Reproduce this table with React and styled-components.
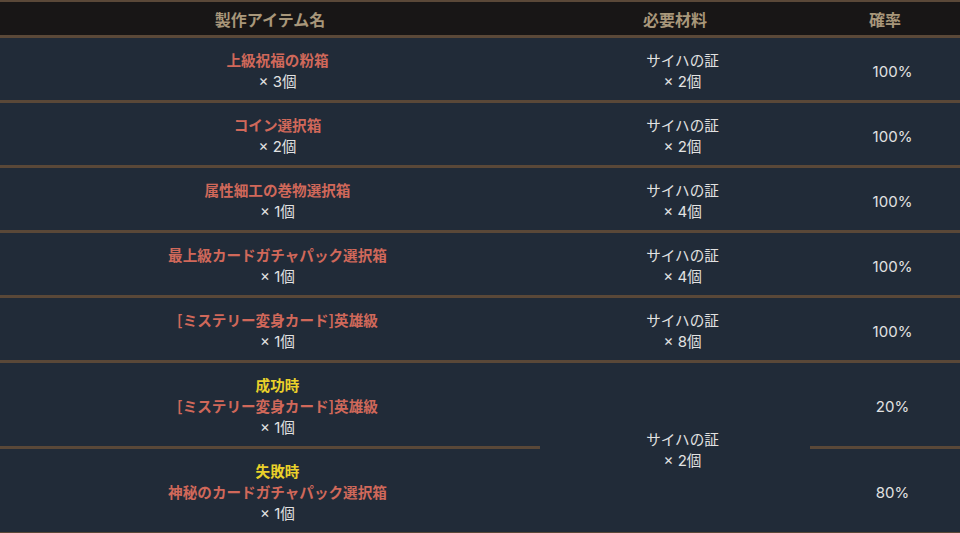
import styled, { createGlobalStyle } from "styled-components";

const rows = [
  { name: "上級祝福の粉箱", qty: 3, mat: 2, rate: "100%" },
  { name: "コイン選択箱", qty: 2, mat: 2, rate: "100%" },
  { name: "属性細工の巻物選択箱", qty: 1, mat: 4, rate: "100%" },
  { name: "最上級カードガチャパック選択箱", qty: 1, mat: 4, rate: "100%" },
  { name: "[ミステリー変身カード]英雄級", qty: 1, mat: 8, rate: "100%" },
];

function Quantity({ count }) {
  return (
    <div>
      <Num>× {count}</Num>個
    </div>
  );
}

export default function App() {
  return (
    <>
      <GlobalStyle />
      <StyledTable>
        <thead>
          <tr>
            <HeadCell $width="540px">製作アイテム名</HeadCell>
            <HeadCell $width="270px">必要材料</HeadCell>
            <HeadCell $width="150px">確率</HeadCell>
          </tr>
        </thead>
        <tbody>
          {rows.map((row) => (
            <tr key={row.name}>
              <Cell>
                <ItemName>{row.name}</ItemName>
                <Quantity count={row.qty} />
              </Cell>
              <Cell>
                <div>サイハの証</div>
                <Quantity count={row.mat} />
              </Cell>
              <Cell>
                <Num>{row.rate}</Num>
              </Cell>
            </tr>
          ))}
          <tr>
            <Cell>
              <Outcome>成功時</Outcome>
              <ItemName>[ミステリー変身カード]英雄級</ItemName>
              <Quantity count={1} />
            </Cell>
            <Cell rowSpan={2}>
              <div>サイハの証</div>
              <Quantity count={2} />
            </Cell>
            <Cell>
              <Num>20%</Num>
            </Cell>
          </tr>
          <tr>
            <Cell>
              <Outcome>失敗時</Outcome>
              <ItemName>神秘のカードガチャパック選択箱</ItemName>
              <Quantity count={1} />
            </Cell>
            <Cell>
              <Num>80%</Num>
            </Cell>
          </tr>
        </tbody>
      </StyledTable>
    </>
  );
}

const GlobalStyle = createGlobalStyle`
  body {
    margin: 0;
    background-color: #212b38;
    font-family: "Noto Sans CJK JP", sans-serif;
  }
`;

const StyledTable = styled.table`
  width: 960px;
  border-collapse: collapse;
  table-layout: fixed;
  border-top: 2px solid #5a4838;
`;

const HeadCell = styled.th`
  width: ${(props) => props.$width};
  height: 33px;
  padding: 0;
  background-color: #181616;
  color: #a8977a;
  font-size: 16px;
  font-weight: 700;
  line-height: 20px;
  text-align: center;
  vertical-align: middle;
  border-bottom: 3px solid #5a4838;
`;

const Cell = styled.td`
  padding: 11px 0 9px 15px;
  background-color: #212b38;
  color: #e2e2e2;
  font-size: 14.6px;
  line-height: 21px;
  text-align: center;
  vertical-align: middle;
  border-bottom: 3px solid #5a4838;
`;

const Num = styled.span`
  font-family: Inter, "Noto Sans CJK JP", sans-serif;
  font-size: 15px;
  line-height: 1;
`;

const ItemName = styled.div`
  color: #d0685a;
  font-weight: 700;
`;

const Outcome = styled.div`
  color: #ead12a;
  font-weight: 700;
`;
